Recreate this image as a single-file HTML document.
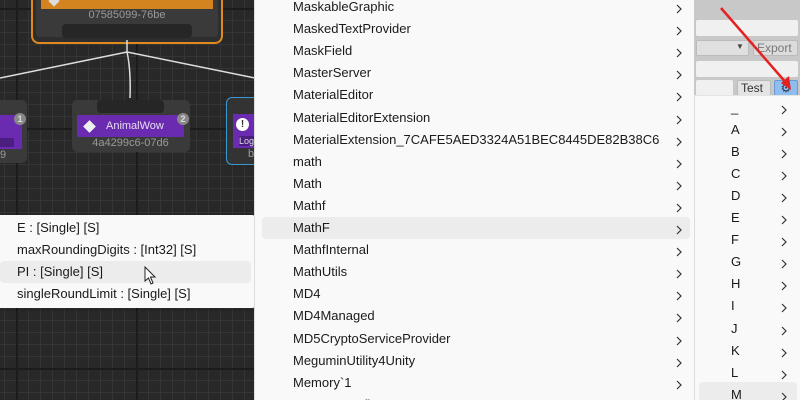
<!DOCTYPE html>
<html style="overflow:hidden;height:400px"><head><style>
*{margin:0;padding:0;box-sizing:border-box}
body{width:800px;height:400px;overflow:hidden;position:relative;font-family:"Liberation Sans","DejaVu Sans",sans-serif;
background-color:#282828;
background-image:
linear-gradient(90deg,#1c1c1c 2px,transparent 2px),
linear-gradient(#1c1c1c 2px,transparent 2px),
linear-gradient(90deg,#353535 1px,transparent 1px),
linear-gradient(#353535 1px,transparent 1px);
background-size:120px 120px,120px 120px,12px 12px,12px 12px;
background-position:16px 0,0 128px,4px 0,0 8px;}
.abs{position:absolute}
.node{position:absolute;background:#3a3a3a;border-radius:5px}
.hdr{position:absolute;background:#6a2bb0}
.id{position:absolute;color:#9a9a9a;font-size:11px;text-align:center}
.badge{position:absolute;width:12px;height:12px;border-radius:6px;background:#888;color:#ddd;font-size:9px;text-align:center;line-height:12px;font-weight:bold}
.menu{position:absolute;background:#f9f9f9;font-size:13px;color:#1a1a1a;overflow:hidden}
.it{position:absolute;left:0;right:0;height:22px;line-height:22px}
</style></head><body>
<div class="abs" style="left:31px;top:-10px;width:192px;height:54px;border:2px solid #e08a1e;border-radius:8px;background:#2e2e2e"></div>
<div class="abs" style="left:36px;top:-5px;width:182px;height:42px;background:#3a3a3a;border-radius:4px"></div>
<div class="abs" style="left:41px;top:-5px;width:172px;height:14px;background:#d4841e"></div>
<div class="abs" style="left:50px;top:-3px;width:8px;height:8px;background:#ddd;transform:rotate(45deg)"></div>
<div class="id" style="left:41px;top:9px;width:172px">07585099-76be</div>
<div class="abs" style="left:62px;top:24px;width:130px;height:14px;background:#262626;border-radius:4px"></div>
<svg class="abs" style="left:0;top:0" width="260" height="120"><path d="M127 40 L127 52 L0 78 M127 52 L255 78 M127 52 Q131 70 130 98" stroke="#ddd" stroke-width="1.5" fill="none"/></svg>
<div class="node" style="left:-10px;top:100px;width:37px;height:63px"></div>
<div class="hdr" style="left:-10px;top:115px;width:32px;height:34px"></div>
<div class="abs" style="left:-10px;top:138px;width:24px;height:9px;background:#4a1f80"></div>
<div class="id" style="left:0;top:149px;width:6px">9</div>
<div class="badge" style="left:14px;top:113px">1</div>
<div class="node" style="left:72px;top:100px;width:118px;height:52px"></div>
<div class="abs" style="left:97px;top:100px;width:67px;height:13px;background:#262626;border-radius:4px"></div>
<div class="hdr" style="left:77px;top:115px;width:107px;height:22px"></div>
<div class="abs" style="left:85px;top:122px;width:9px;height:9px;background:#eee;transform:rotate(45deg)"></div>
<div class="abs" style="left:106px;top:120px;color:#e6dcf5;font-size:11px">AnimalWow</div>
<div class="id" style="left:77px;top:137px;width:107px">4a4299c6-07d6</div>
<div class="badge" style="left:177px;top:113px">2</div>
<div class="abs" style="left:226px;top:97px;width:40px;height:68px;border:1.5px solid #3a9ad0;border-radius:6px;background:#333"></div>
<div class="hdr" style="left:233px;top:114px;width:30px;height:34px"></div>
<div class="abs" style="left:236px;top:118px;width:13px;height:13px;border-radius:7px;background:#fff;color:#333;font-size:10px;font-weight:bold;text-align:center;line-height:13px">!</div>
<div class="abs" style="left:239px;top:136px;color:#ddd;font-size:9px;background:#4a1f80">Log</div>
<div class="id" style="left:248px;top:148px">b</div>
<div class="menu" style="left:0;top:215px;width:256px;height:93px;border-radius:0 4px 4px 0;box-shadow:0 1px 3px rgba(0,0,0,.3)">
<div class="abs" style="left:0;top:46px;width:251px;height:22px;background:#ececec;border-radius:4px"></div>
<div class="it" style="top:2px;left:17px">E : [Single] [S]</div>
<div class="it" style="top:24px;left:17px">maxRoundingDigits : [Int32] [S]</div>
<div class="it" style="top:46px;left:17px">PI : [Single] [S]</div>
<div class="it" style="top:68px;left:17px">singleRoundLimit : [Single] [S]</div>
</div>
<svg class="abs" style="left:144px;top:266px" width="14" height="20"><path d="M1 1 L1 15 L4.5 12 L7 18 L9 17 L6.5 11 L11 11 Z" fill="#fff" stroke="#222" stroke-width="1"/></svg>
<div class="menu" style="left:254px;top:0;width:441px;height:400px;border-left:1px solid #ddd">
<div class="abs" style="left:7px;top:217px;width:428px;height:22px;background:#ececec;border-radius:4px"></div>
<div id="mm"></div>
</div>
<div class="abs" style="left:694px;top:0;width:106px;height:96px;background:#c8c8c8"></div>
<div class="abs" style="left:696px;top:20px;width:102px;height:16px;background:#f0f0f0;border-radius:2px"></div>
<div class="abs" style="left:696px;top:40px;width:53px;height:16px;background:#e0e0e0;border:1px solid #bbb;border-radius:2px"></div>
<div class="abs" style="left:736px;top:42px;color:#444;font-size:8px">▼</div>
<div class="abs" style="left:753px;top:40px;width:45px;height:16px;background:#dcdcdc;border:1px solid #bbb;border-radius:2px;color:#777;font-size:12px;line-height:14px;padding-left:3px">Export</div>
<div class="abs" style="left:696px;top:61px;width:102px;height:16px;background:#f0f0f0;border-radius:2px"></div>
<div class="abs" style="left:696px;top:80px;width:37px;height:16px;background:#f0f0f0;border-radius:2px"></div>
<div class="abs" style="left:737px;top:80px;width:34px;height:16px;background:#e4e4e4;border:1px solid #bbb;border-radius:2px;color:#333;font-size:12px;line-height:15px;padding-left:3px">Test</div>
<div class="abs" style="left:774px;top:80px;width:24px;height:16px;background:#8ebef0;border:1px solid #6a9ad0;border-radius:2px;color:#334;font-size:12px;text-align:center;line-height:14px">⚙</div>
<svg class="abs" style="left:715px;top:5px" width="85" height="90"><path d="M6 3 L73 80" stroke="#e52020" stroke-width="2.5"/><path d="M76 85 L66 78 L74 71 Z" fill="#e52020"/></svg>
<div class="menu" style="left:694px;top:95px;width:106px;height:305px;border-left:1px solid #ddd;border-top:1px solid #e4e4e4">
<div class="abs" style="left:4px;top:286px;width:98px;height:22px;background:#ececec;border-radius:4px"></div>
<div id="sm"></div>
</div>
<script>
var chev='<svg width="6" height="10"><path d="M1 1 L5 5 L1 9" stroke="#333" stroke-width="1.2" fill="none"/></svg>';
var n=["MaskableGraphic","MaskedTextProvider","MaskField","MasterServer","MaterialEditor","MaterialEditorExtension","MaterialExtension_7CAFE5AED3324A51BEC8445DE82B38C6","math","Math","Mathf","MathF","MathfInternal","MathUtils","MD4","MD4Managed","MD5CryptoServiceProvider","MeguminUtility4Unity","Memory`1","MemoryConfig"];
var h="";n.forEach(function(t,i){var y=-4+i*22.1;h+='<div class="abs" style="left:38px;top:'+y+'px;height:22px;line-height:22px;font-size:13px;color:#1a1a1a;white-space:nowrap">'+t+'</div><div class="abs" style="left:421px;top:'+(y+6)+'px">'+chev+'</div>';});
document.getElementById("mm").innerHTML=h;
var s=["_","A","B","C","D","E","F","G","H","I","J","K","L","M"];h="";
s.forEach(function(t,i){var y=1+i*22.05;h+='<div class="abs" style="left:36px;top:'+y+'px;height:22px;line-height:22px;font-size:13px;color:#1a1a1a">'+t+'</div><div class="abs" style="left:86px;top:'+(y+6)+'px">'+chev+'</div>';});
document.getElementById("sm").innerHTML=h;
</script>
</body></html>
